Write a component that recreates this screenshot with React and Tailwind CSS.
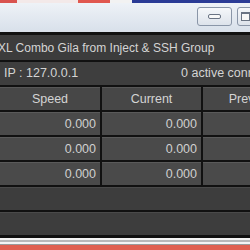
export default function App() {
  const rows = [
    ['0.000', '0.000'],
    ['0.000', '0.000'],
    ['0.000', '0.000'],
  ];

  return (
    <div
      className="w-[250px] h-[250px] overflow-hidden flex flex-col bg-[#3c3c3c]"
      style={{ fontFamily: '"Liberation Sans", Arial, sans-serif' }}
    >
      {/* strip of the window behind */}
      <div className="h-[3px] flex shrink-0">
        <div className="w-[17px] bg-[#d9534f]" />
        <div className="w-[61px] bg-[#f3e9e9]" />
        <div className="w-[32px] bg-[#e0574f]" />
        <div className="w-[22px] bg-[#f2f2f2]" />
        <div className="flex-1 bg-[#2b3b96]" />
      </div>

      {/* title bar */}
      <div className="h-[29px] shrink-0 bg-gradient-to-b from-[#eef2f7] to-[#d8e0ea] flex items-start pt-[4px] pl-[197px] gap-[5px]">
        <div className="w-[35px] h-[19px] shrink-0 rounded-[3px] border border-[#8a96a8] bg-gradient-to-b from-[#f5f7fa] to-[#dde3eb] flex items-center justify-center">
          <div className="w-[13px] h-[5px] rounded-[2px] border border-[#6a7484] bg-[#f8f8f8]" />
        </div>
        <div className="w-[35px] h-[19px] shrink-0 rounded-[3px] border border-[#8a96a8] bg-gradient-to-b from-[#f5f7fa] to-[#dde3eb] flex items-center pl-[3px]">
          <div className="w-[9px] h-[9px] border border-[#6a7484] border-t-2 bg-[#f8f8f8]" />
        </div>
      </div>

      <div className="h-[3px] shrink-0 bg-[#111]" />

      {/* app title */}
      <div className="h-[25px] shrink-0 flex items-center -ml-[2px] pt-[1px] text-[12px] text-[#d4d4d4] whitespace-nowrap">
        XL Combo Gila from Inject &amp; SSH Group
      </div>

      <div className="h-[2px] shrink-0 bg-[#111]" />

      {/* status row */}
      <div className="h-[23px] shrink-0 flex items-center pl-[4px] text-[12.5px] text-[#d4d4d4] whitespace-nowrap bg-[#3e3e3e]">
        <span className="w-[177px] shrink-0">IP : 127.0.0.1</span>
        <span className="shrink-0">0 active connections</span>
      </div>

      <div className="h-[2px] shrink-0 bg-[#111]" />

      {/* table header */}
      <div className="h-[23px] shrink-0 flex text-[12.5px] text-[#d4d4d4] whitespace-nowrap">
        <div className="w-[100px] shrink-0 flex items-center justify-center bg-[#474747] border-t border-[#575757]">Speed</div>
        <div className="w-[2px] shrink-0 bg-[#111]" />
        <div className="w-[99px] shrink-0 flex items-center justify-center bg-[#474747] border-t border-[#575757]">Current</div>
        <div className="w-[2px] shrink-0 bg-[#111]" />
        <div className="w-[100px] shrink-0 flex items-center justify-center bg-[#474747] border-t border-[#575757]">Previous</div>
      </div>

      {rows.map((r, i) => (
        <div key={i} className="flex flex-col shrink-0">
          <div className="h-[2px] bg-[#111]" />
          <div className="h-[23px] flex text-[12.5px] text-[#d0d0d0]">
            <div className="w-[100px] shrink-0 flex items-center justify-end pr-[4px] bg-[#4a4a4a] border-t border-[#5a5a5a]">{r[0]}</div>
            <div className="w-[2px] shrink-0 bg-[#111]" />
            <div className="w-[99px] shrink-0 flex items-center justify-end pr-[4px] bg-[#4a4a4a] border-t border-[#5a5a5a]">{r[1]}</div>
            <div className="w-[2px] shrink-0 bg-[#111]" />
            <div className="w-[100px] shrink-0 bg-[#4a4a4a] border-t border-[#5a5a5a]" />
          </div>
        </div>
      ))}

      <div className="h-[2px] shrink-0 bg-[#111]" />
      <div className="h-[23px] shrink-0 bg-[#3d3d3d] border-t border-[#4a4a4a]" />
      <div className="h-[2px] shrink-0 bg-[#111]" />
      <div className="h-[23px] shrink-0 bg-[#3d3d3d] border-t border-[#4a4a4a]" />
      <div className="h-[3px] shrink-0 bg-[#111]" />

      {/* bottom edge */}
      <div className="flex-1 flex flex-col">
        <div className="h-[2px] bg-[#f4f4f4]" />
        <div className="h-[2px] bg-[#b8b8b8]" />
        <div className="h-[2px] bg-[#f4f4f4]" />
        <div className="h-[1px] bg-[#9a9a9a]" />
        <div className="flex-1 bg-[#e06050]" />
      </div>
    </div>
  );
}
